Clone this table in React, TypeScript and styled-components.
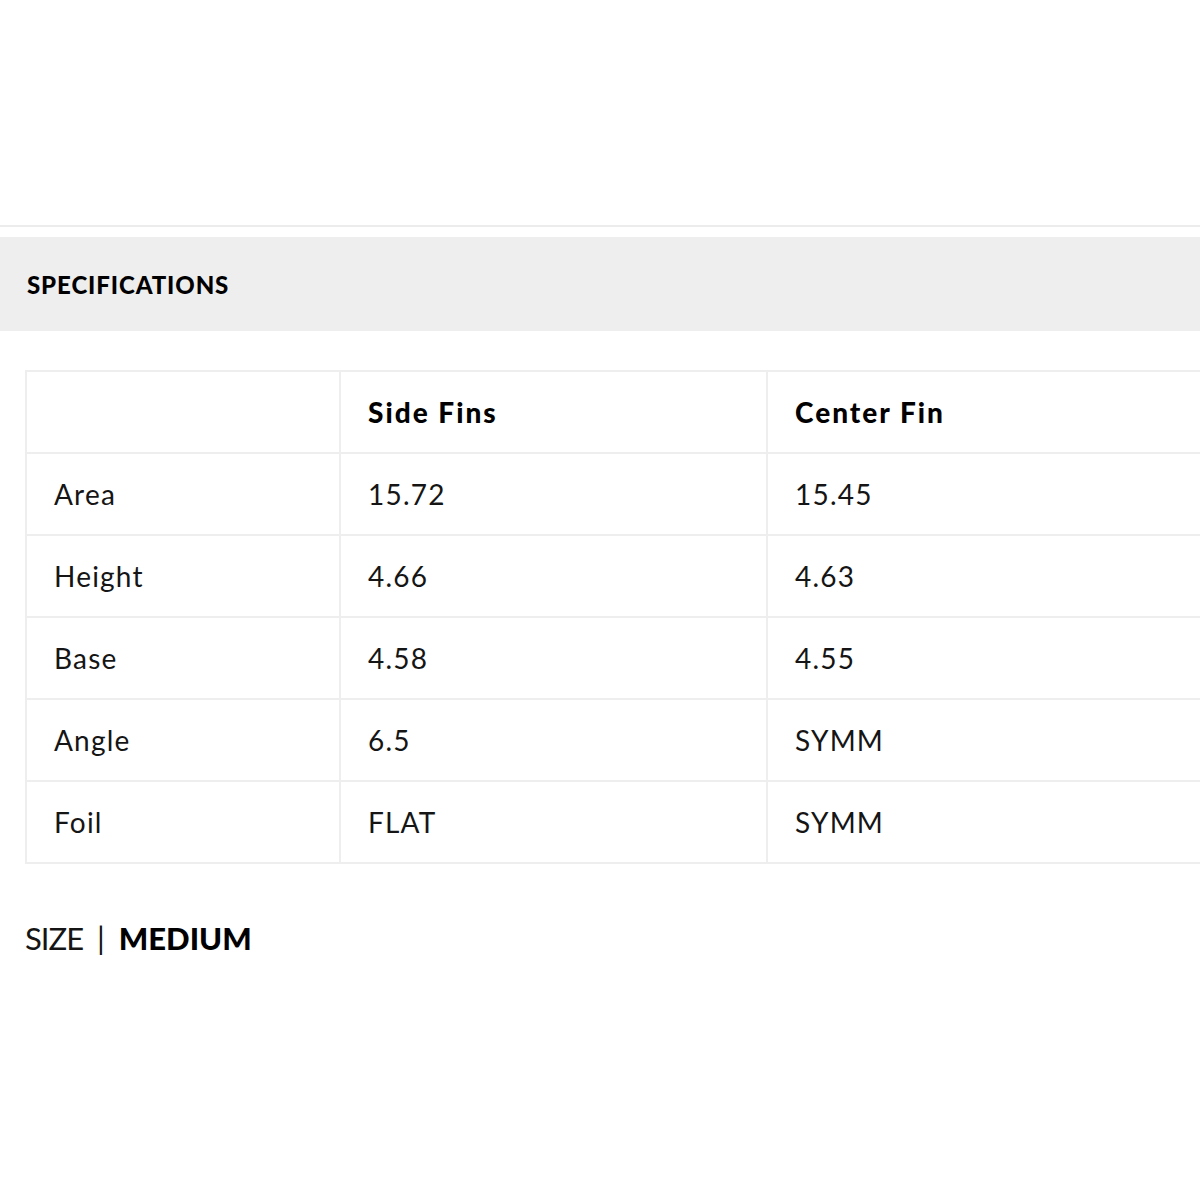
import React from "react";
import styled, { createGlobalStyle } from "styled-components";

const Global = createGlobalStyle`
  html, body { margin: 0; padding: 0; background: #fff; overflow: hidden; }
  body { font-family: "Lato", "Liberation Sans", sans-serif; color: #111; }
`;

const Page = styled.div`
  width: 1200px;
  height: 1201px;
  overflow: hidden;
  padding-top: 225px;
  box-sizing: border-box;
`;

const Divider = styled.div`
  height: 2px;
  background: #ececec;
`;

const Band = styled.div`
  margin-top: 10px;
  height: 94px;
  background: #eeeeee;
  display: flex;
  align-items: center;
  padding-left: 27px;
  box-sizing: border-box;
`;

const BandTitle = styled.h2`
  margin: 0;
  font-size: 24px;
  font-weight: 900;
  letter-spacing: 0.9px;
  color: #000;
`;

const Table = styled.table`
  margin: 39px 0 0 25px;
  border-collapse: collapse;
  table-layout: fixed;
  width: 1300px;
`;

const Cell = styled.td<{ $head?: boolean }>`
  border: 2px solid #eeeeee;
  height: 82px;
  box-sizing: border-box;
  padding: 0 0 0 27px;
  font-size: 28px;
  font-weight: ${(p) => (p.$head ? 900 : 400)};
  color: ${(p) => (p.$head ? "#000" : "#151515")};
  letter-spacing: ${(p) => (p.$head ? "2px" : "1.2px")};
  vertical-align: middle;
  white-space: nowrap;
`;

const SizeLine = styled.div`
  margin: 55px 0 0 25px;
  font-size: 31px;
  color: #151515;
  display: flex;
  align-items: baseline;
  gap: 14px;
`;

const SizeLabel = styled.span`
  letter-spacing: -1px;
`;

const SizeValue = styled.span`
  font-weight: 900;
  color: #000;
`;

const rows: [string, string, string][] = [
  ["Area", "15.72", "15.45"],
  ["Height", "4.66", "4.63"],
  ["Base", "4.58", "4.55"],
  ["Angle", "6.5", "SYMM"],
  ["Foil", "FLAT", "SYMM"],
];

export default function App() {
  return (
    <Page>
      <Global />
      <Divider />
      <Band>
        <BandTitle>SPECIFICATIONS</BandTitle>
      </Band>
      <Table>
        <colgroup>
          <col style={{ width: 314 }} />
          <col style={{ width: 427 }} />
          <col />
        </colgroup>
        <tbody>
          <tr>
            <Cell $head />
            <Cell $head>Side Fins</Cell>
            <Cell $head>Center Fin</Cell>
          </tr>
          {rows.map((r) => (
            <tr key={r[0]}>
              <Cell>{r[0]}</Cell>
              <Cell>{r[1]}</Cell>
              <Cell>{r[2]}</Cell>
            </tr>
          ))}
        </tbody>
      </Table>
      <SizeLine>
        <SizeLabel>SIZE</SizeLabel>
        <span>|</span>
        <SizeValue>MEDIUM</SizeValue>
      </SizeLine>
    </Page>
  );
}
